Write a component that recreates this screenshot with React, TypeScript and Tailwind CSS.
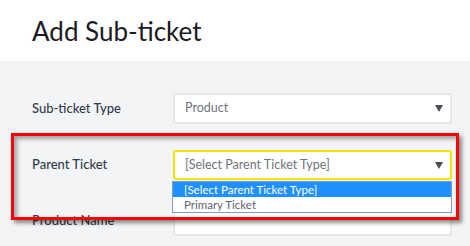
const font = { fontFamily: 'Lato, "Open Sans", sans-serif' }

function Arrow() {
  return (
    <svg width="8" height="7" viewBox="0 0 8 7" className="shrink-0">
      <path d="M0 0h8L4 7z" fill="#4b4f55" />
    </svg>
  )
}

function SelectBox({
  value,
  active = false,
}: {
  value: string
  active?: boolean
}) {
  return (
    <div
      className={
        active
          ? 'flex h-[30px] w-[279px] items-center justify-between rounded-[3px] border-2 border-[#f5e400] bg-white pl-[10px] pr-[7px]'
          : 'flex h-[31px] w-[279px] items-center justify-between rounded-[3px] border-2 border-[#e6e7e9] bg-white pl-[10px] pr-[7px]'
      }
    >
      <span className="text-[12.5px] text-[#6f7480]">{value}</span>
      <Arrow />
    </div>
  )
}

export default function App() {
  return (
    <div className="relative flex h-[246px] w-[470px] flex-col overflow-hidden" style={font}>
      <div className="flex h-[61px] items-center bg-white pl-[32px]">
        <h1 className="text-[26px] leading-none text-[#1c1b22]">Add Sub-ticket</h1>
      </div>

      <div className="flex flex-1 flex-col gap-[26px] bg-[#f3f4f6] pl-[32px] pt-[32px]">
        <div className="flex items-center">
          <label className="w-[141px] text-[13px] font-medium text-[#333b4c]">
            Sub-ticket Type
          </label>
          <SelectBox value="Product" />
        </div>

        <div className="flex items-center">
          <label className="w-[141px] text-[13px] font-medium text-[#333b4c]">
            Parent Ticket
          </label>
          <div className="relative">
            <SelectBox value="[Select Parent Ticket Type]" active />
            <div className="absolute left-[-1px] top-[31px] z-10 w-[280px] border border-[#7d9bd0] bg-white text-[11.5px] leading-[15px]">
              <div className="bg-[#1e90ff] pl-[11px] text-white">
                [Select Parent Ticket Type]
              </div>
              <div className="pl-[11px] text-[#5f6370]">Primary Ticket</div>
            </div>
          </div>
        </div>

        <div className="flex items-center">
          <label className="w-[141px] text-[13px] font-medium text-[#333b4c]">
            Product Name
          </label>
          <div className="h-[30px] w-[279px] rounded-[3px] border-2 border-[#e6e7e9] bg-white" />
        </div>
      </div>

      <div className="pointer-events-none absolute left-[11px] top-[133px] z-20 h-[87px] w-[448px] border-[3px] border-[#ff0000] shadow-[3px_3px_4px_rgba(0,0,0,0.45),inset_3px_3px_4px_rgba(0,0,0,0.35)]" />
    </div>
  )
}
